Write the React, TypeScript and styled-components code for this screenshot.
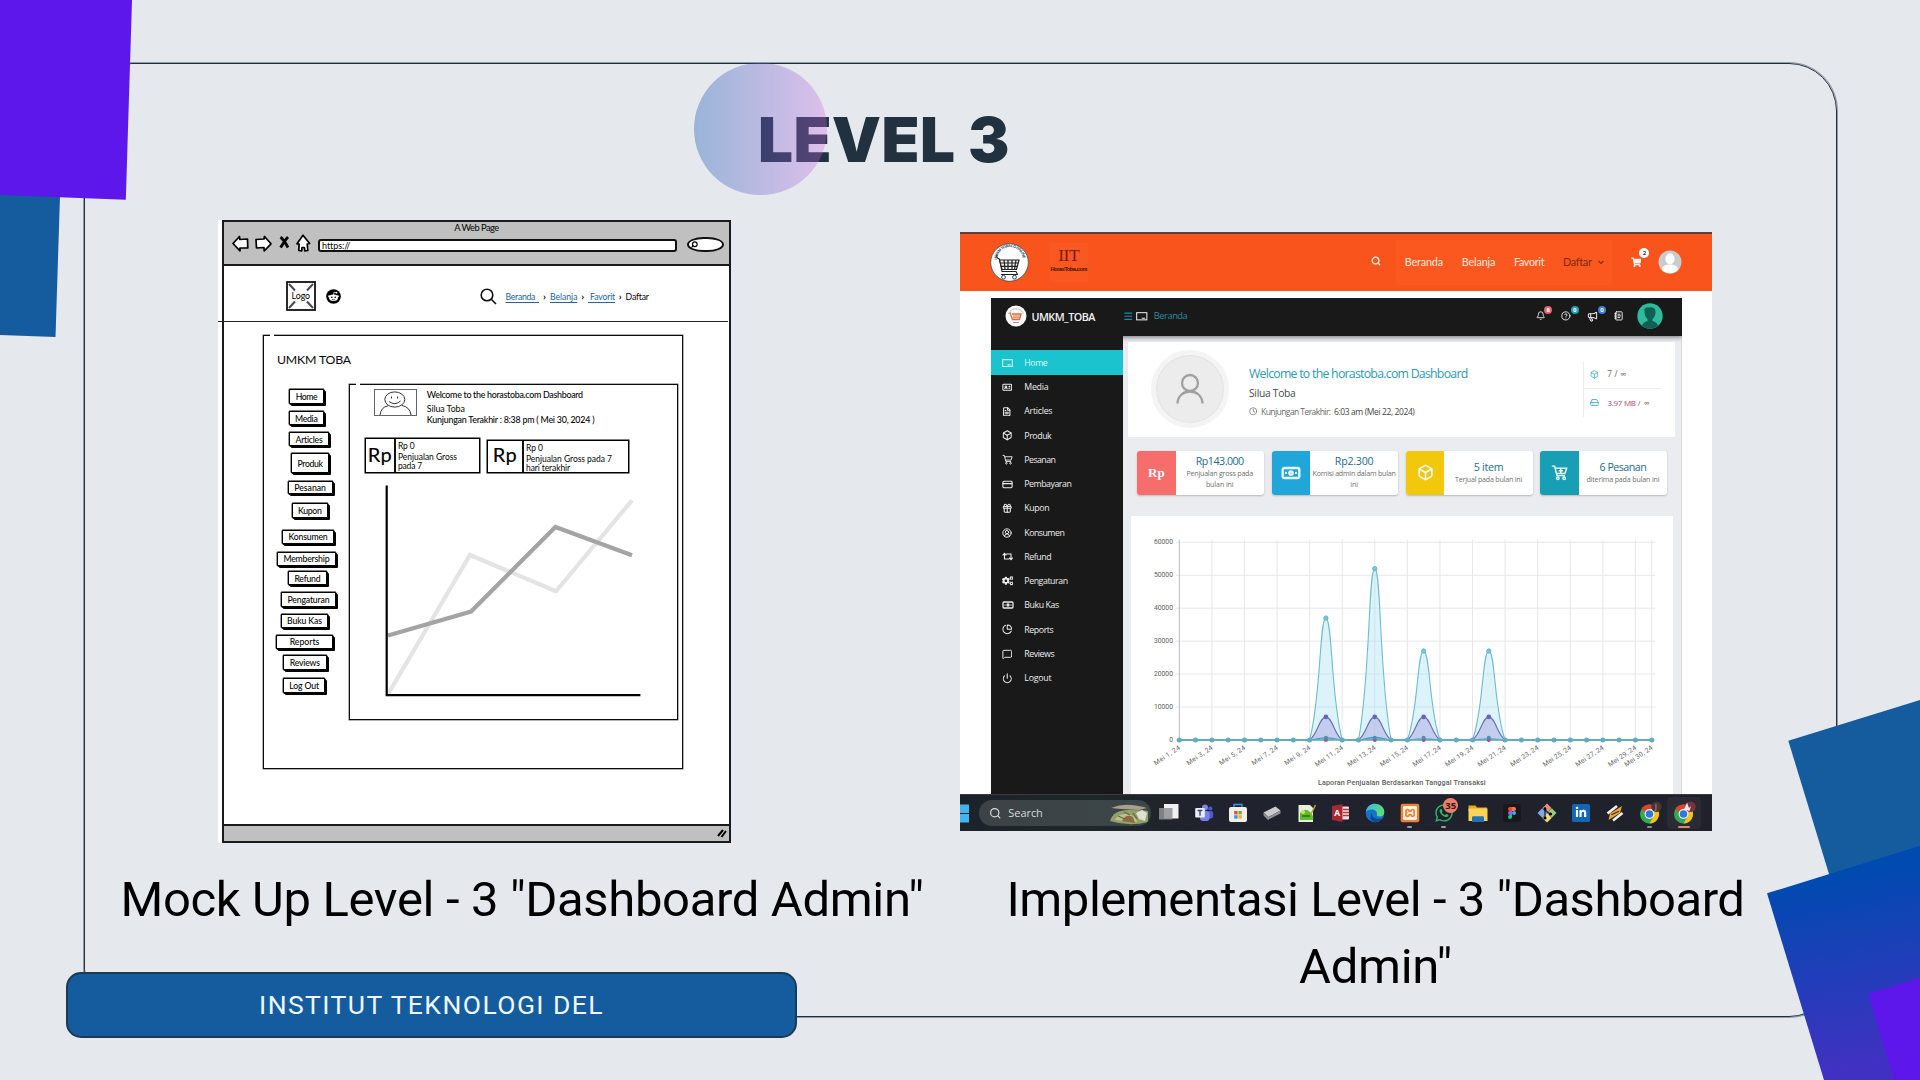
import React, { useLayoutEffect, useRef, useState } from "react";
import styled, { createGlobalStyle, css } from "styled-components";
import {
  Banknote, Box, ChartPie, CircleHelp, CircleUserRound, Clock, CreditCard, FileText, Gift,
  HardDrive, IdCard, Megaphone, Bell, Menu, MessageSquare, NotebookText, Power, Search,
} from "lucide-react";
import { FaCogs, FaLinkedinIn, FaShoppingCart, FaWhatsapp } from "react-icons/fa";
import { SiXampp } from "react-icons/si";

const Global = createGlobalStyle`
  * { box-sizing: border-box; }
  html, body { margin: 0; padding: 0; background: #e5e9ee; }
`;

const SKETCH = `"Lato", "Open Sans", sans-serif`;
const UI = `"Open Sans", "Noto Sans", sans-serif`;
const DISPLAY = `Inter, "Liberation Sans", sans-serif`;
const CAPTION = `Roboto, "Liberation Sans", sans-serif`;

/* ---------- text ---------- */

interface LabelProps {
  $size: number;
  $color?: string;
  $weight?: number;
  $line?: number;
  $font?: string;
  $underline?: boolean;
}

const Label = styled.span<LabelProps>`
  display: block;
  flex: none;
  width: max-content;
  white-space: pre;
  font-family: ${(p) => p.$font ?? "inherit"};
  font-size: ${(p) => p.$size}px;
  font-weight: ${(p) => p.$weight ?? 400};
  line-height: ${(p) => (p.$line ? `${p.$line}px` : "1.2")};
  color: ${(p) => p.$color ?? "inherit"};
  ${(p) => p.$underline && css`
    text-decoration: underline;
    text-underline-offset: 1.5px;
    text-decoration-thickness: 1px;
  `}
`;

/* Tracks a line of text so that it fills the given measure. */
function Fit({ w, children, ...rest }: LabelProps & { w: number; children: React.ReactNode }) {
  const ref = useRef<HTMLSpanElement>(null);
  const [track, setTrack] = useState(0);
  useLayoutEffect(() => {
    const el = ref.current;
    if (!el) return;
    const n = (el.textContent ?? "").length;
    el.style.letterSpacing = "0px";
    const natural = parseFloat(getComputedStyle(el).width);
    const t = (w - natural) / Math.max(1, n);
    el.style.letterSpacing = `${t}px`;
    setTrack(t);
  }, [w, children]);
  return <Label ref={ref} style={{ letterSpacing: `${track}px` }} {...rest}>{children}</Label>;
}

/* ---------- slide ---------- */

const Slide = styled.main`
  position: relative;
  width: 1920px;
  height: 1080px;
  overflow: hidden;
  background: #e5e9ee;
  font-family: ${DISPLAY};
`;

const Frame = styled.div`
  position: absolute;
  left: 84px;
  top: 63px;
  width: 1753px;
  height: 954px;
  border: 1px solid #22303e;
  border-radius: 48px;
  box-shadow: 0 0 0 1px rgba(34, 48, 62, 0.42);
`;

const Backdrop = styled.svg`
  position: absolute;
  inset: 0;
`;

const Glow = styled.div`
  position: absolute;
  left: 694px;
  top: 62.5px;
  width: 132.5px;
  height: 132.5px;
  border-radius: 50%;
  background: linear-gradient(90deg, #004aad, #cb6ce6);
  opacity: 0.33;
  z-index: 2;
`;

const Page = styled.div`
  position: relative;
  display: flex;
  flex-direction: column;
  height: 100%;
`;

const Heading = styled.h1`
  margin: 0;
  height: 220px;
  padding: 102px 0 0 758px;
`;

const Columns = styled.div`
  display: flex;
  gap: 26px;
  padding-left: 110px;
`;

const Column = styled.section<{ $w: number; $top?: number }>`
  width: ${(p) => p.$w}px;
  padding-top: ${(p) => p.$top ?? 0}px;
`;

const Caption = styled.div<{ $top: number }>`
  display: flex;
  flex-direction: column;
  align-items: center;
  margin-top: ${(p) => p.$top}px;
  font-family: ${CAPTION};
`;

const Institute = styled.div`
  display: flex;
  align-items: center;
  width: 731px;
  height: 66px;
  margin: 39px 0 0 -44px;
  padding: 0 0 1px 191px;
  border: 2px solid #1b3a55;
  border-radius: 15px;
  background: #155c9e;
  font-family: ${CAPTION};
`;

/* ---------- wireframe ---------- */

const Paper = styled.div`
  width: 513px;
  height: 623px;
  margin-left: 108px;
  padding-left: 4px;
  background: #fff;
  font-family: ${SKETCH};
  color: #060606;
`;

const Browser = styled.div`
  display: flex;
  flex-direction: column;
  width: 509px;
  height: 623px;
  border: 2px solid #1a1a1a;
`;

const BrowserBar = styled.div`
  display: flex;
  flex-direction: column;
  align-items: center;
  height: 44px;
  border-bottom: 2px solid #1a1a1a;
  background: #c0c0c0;
`;

const BrowserTools = styled.div`
  display: flex;
  align-items: center;
  width: 100%;
  height: 23px;
  padding-left: 8px;
  svg { flex: none; }
`;

const BackArrow = styled.svg`margin-top: -4px;`;
const NextArrow = styled.svg`margin: -4px 0 0 6px;`;
const StopMark = styled.svg`margin: -6px 0 0 7px;`;
const HomeMark = styled.svg`margin: -5px 0 0 6px;`;
const RedditMark = styled.svg`margin-left: 10px;`;
const SiteSearch = styled.svg`margin: 0 9px 0 138.5px;`;

const Address = styled.div`
  display: flex;
  align-items: center;
  width: 359px;
  height: 13px;
  margin: 0 10px 0 7px;
  padding-left: 2px;
  border: 2px solid #111;
  border-radius: 3px;
  background: #fff;
`;

const Pill = styled.div`
  display: flex;
  align-items: center;
  width: 37px;
  height: 15px;
  margin-top: -2px;
  padding-left: 2px;
  border: 2px solid #111;
  border-radius: 18px / 8px;
  background: #fff;
  svg { transform: scaleX(-1); }
`;

const SiteNav = styled.div`
  display: flex;
  align-items: center;
  height: 55px;
  padding: 5px 0 0 62px;
  svg { flex: none; }
`;

const Crumb = styled.span<{ $w: number }>`
  width: ${(p) => p.$w}px;
  text-align: center;
  font-size: 10px;
  font-weight: 700;
  line-height: 10px;
`;

const Rule = styled.div`
  flex: none;
  width: 510px;
  height: 1px;
  margin-left: -6px;
  background: #222;
`;

const panel = css<{ $gap: number }>`
  position: relative;
  border: 1px solid #0c0c0c;
  box-shadow: 0 0 0 0.5px rgba(0, 0, 0, 0.6);
  &::before {
    content: "";
    position: absolute;
    left: ${(p) => p.$gap}px;
    top: -2px;
    width: 4px;
    height: 3px;
    background: #fff;
  }
`;

const OuterPanel = styled.div<{ $gap: number }>`
  ${panel}
  flex: none;
  width: 420px;
  height: 434px;
  margin: 13px 0 0 39px;
  padding-top: 16px;
`;

const PanelTitle = styled.div`
  height: 16px;
  padding-left: 13px;
`;

const PanelBody = styled.div`
  display: flex;
`;

const ButtonRail = styled.div`
  display: flex;
  flex-direction: column;
  width: 85px;
  padding-top: 21.3px;
`;

const SketchButton = styled.div<{ $x: number; $w: number; $h: number; $gap: number }>`
  display: flex;
  flex: none;
  align-items: center;
  justify-content: center;
  width: ${(p) => p.$w - 2}px;
  height: ${(p) => p.$h - 2}px;
  margin: ${(p) => p.$gap}px 0 2px ${(p) => p.$x}px;
  border: 1px solid #000;
  border-radius: 1px;
  background: #fff;
  box-shadow: 0 0 0 0.4px #000, 1px 1px 0 #000, 2px 2px 0 #000;
`;

const InnerPanel = styled.div<{ $gap: number }>`
  ${panel}
  flex: none;
  width: 329px;
  height: 336px;
  margin-top: 16px;
`;

const Visitor = styled.div`
  display: flex;
  height: 52.7px;
  padding: 4.3px 0 0 24.3px;
  gap: 9.5px;
`;

const SketchCards = styled.div`
  display: flex;
  gap: 6.7px;
  height: 35px;
  padding-left: 15px;
`;

const SketchCard = styled.div<{ $w: number; $top: number; $cell: number }>`
  display: flex;
  width: ${(p) => p.$w}px;
  margin-top: ${(p) => p.$top}px;
  border: 1px solid #000;
  box-shadow: 0 0 0 0.5px #000;
  overflow: hidden;
  > :first-child { width: ${(p) => p.$cell}px; }
`;

const RpCell = styled.div`
  display: flex;
  flex: none;
  justify-content: center;
  border-right: 2px solid #111;
`;

const RpLines = styled.div`
  padding: 2.5px 0 0 2px;
`;

const StatusBar = styled.div`
  display: flex;
  align-items: center;
  justify-content: flex-end;
  height: 17px;
  margin-top: auto;
  padding-right: 2px;
  border-top: 2px solid #1a1a1a;
  background: #c0c0c0;
`;

type Btn = [string, number, number, number, number, number];
/* label, left, right, top, bottom, text width */
const buttons: Btn[] = [
  ["Home", 289, 326, 389.3, 405.7, 21.7],
  ["Media", 288.5, 326, 411, 427.3, 22.4],
  ["Articles", 289, 331, 432.3, 448.3, 27],
  ["Produk", 290.6, 331.5, 453.3, 475.3, 25],
  ["Pesanan", 287.5, 334.7, 480.7, 496.3, 31.7],
  ["Kupon", 291.6, 330, 503.3, 519.7, 23.4],
  ["Konsumen", 282, 336, 530, 546, 39],
  ["Membership", 277, 337.8, 552, 568, 45.8],
  ["Refund", 287.8, 329, 571.3, 587.3, 26],
  ["Pengaturan", 281, 337.8, 592, 608.7, 42],
  ["Buku Kas", 281, 329.8, 613.7, 629.7, 34.8],
  ["Reports", 276, 335, 634.7, 650.7, 29.6],
  ["Reviews", 283, 328.5, 655.3, 671.7, 30],
  ["Log Out", 283.3, 327, 678.3, 694.7, 29.6],
];

function Wireframe() {
  return (
    <Paper>
      <Browser>
        <BrowserBar>
          <Fit w={44.5} $size={9.3} $line={12}>A Web Page</Fit>
          <BrowserTools>
            <BackArrow width="17" height="17" viewBox="0 0 17 17" fill="#fff" stroke="#000" strokeWidth="1.7" strokeLinejoin="round">
              <path d="M1 8.5 7.5 1.5 7.8 4.5 15.5 4 15.8 13 8 13 8 15.8Z" />
            </BackArrow>
            <NextArrow width="17" height="17" viewBox="0 0 17 17" fill="#fff" stroke="#000" strokeWidth="1.7" strokeLinejoin="round">
              <path d="M16 8.8 9.5 1.5 9 4 1 4.5 1.5 13 9 12.5 9.2 16Z" />
            </NextArrow>
            <StopMark width="11" height="13" viewBox="0 0 11 13" fill="none" stroke="#000" strokeWidth="2.8">
              <path d="M1.5 1.2C5 4 7 8 9 11.5M9 1C6 4 4 8 1.5 11.5" />
            </StopMark>
            <HomeMark width="15" height="18" viewBox="0 0 15 18" fill="#fff" stroke="#000" strokeWidth="1.7" strokeLinejoin="round">
              <path d="M7 1.2 13.6 9.5 11.2 10 11.8 16.5 8.8 16.8 8.4 13.5 6 13.5 5.8 16.8 2.8 16.5 3.2 10 1 9.8Z" />
            </HomeMark>
            <Address><Fit w={28} $size={9} $line={10}>https://</Fit></Address>
            <Pill><Search size={7} strokeWidth={4} /></Pill>
          </BrowserTools>
        </BrowserBar>
        <SiteNav>
          <svg width="30" height="30" viewBox="0 0 30 30">
            <rect x="1" y="1" width="28" height="28" fill="#fff" stroke="#111" strokeWidth="1.8" />
            <path d="M3 3 9 9.5M27 3 21 9.5M3 27 9 20.5M27 27 21 20.5" stroke="#4a4a4a" strokeWidth="2" />
            <path d="M9 9.5 21 20.500M21 9.5 9 20.500" stroke="#e2e2e2" strokeWidth="1" />
            <text x="5.6" y="17.8" fontSize="8.8" fontFamily="Lato" textLength="18.5">Logo</text>
          </svg>
          <RedditMark width="15" height="15" viewBox="0 0 15 15">
            <circle cx="7.5" cy="7.5" r="7.3" fill="#000" />
            <ellipse cx="7.5" cy="8.8" rx="4.4" ry="3.2" fill="#fff" />
            <circle cx="3.2" cy="7.3" r="1.1" fill="#fff" /><circle cx="11.8" cy="7.3" r="1.1" fill="#fff" />
            <circle cx="5.8" cy="8.3" r=".8" /><circle cx="9.2" cy="8.3" r=".8" />
            <path d="M7.5 6 8 3.2 10.3 3.7" stroke="#fff" fill="none" strokeWidth=".7" /><circle cx="10.5" cy="3.7" r=".9" fill="#fff" />
            <path d="M5.8 10.2Q7.5 11.3 9.2 10.2" stroke="#000" fill="none" strokeWidth=".6" />
          </RedditMark>
          <SiteSearch width="17" height="17" viewBox="0 0 17 17" fill="none" stroke="#111" strokeWidth="1.6">
            <circle cx="7" cy="7" r="5.8" /><path d="M11 11 16 16" />
          </SiteSearch>
          <Fit w={33.5} $size={8.7} $line={11} $color="#2064a0" $underline>{"Beranda  "}</Fit>
          <Crumb $w={11}>›</Crumb>
          <Fit w={27.4} $size={8.7} $line={11} $color="#2064a0" $underline>Belanja</Fit>
          <Crumb $w={10.6}>›</Crumb>
          <Fit w={27} $size={8.7} $line={11} $color="#2064a0" $underline>{" Favorit"}</Fit>
          <Crumb $w={10.6}>›</Crumb>
          <Fit w={23} $size={8.7} $line={11}>Daftar</Fit>
        </SiteNav>
        <Rule />
        <OuterPanel $gap={6}>
          <PanelTitle><Fit w={74} $size={12.3} $line={16}>UMKM TOBA</Fit></PanelTitle>
          <PanelBody>
            <ButtonRail>
              {buttons.map(([name, l, r, t, b, w], i) => (
                <SketchButton key={name} $x={l - 264} $w={r - l} $h={b - t} $gap={i ? t - buttons[i - 1][4] : 0}>
                  <Fit w={w} $size={8.7} $line={11} $weight={500}>{name}</Fit>
                </SketchButton>
              ))}
            </ButtonRail>
            <InnerPanel $gap={6}>
              <Visitor>
                <svg width="43" height="27" viewBox="0 0 43 27" fill="none" stroke="#333" strokeWidth="1">
                  <rect x=".5" y=".5" width="42" height="26" stroke="#666" />
                  <ellipse cx="20.8" cy="10.5" rx="10" ry="7.6" />
                  <path d="M15 12.5Q21 17 26.5 12M6 26Q7 18 14 16.8M28 16.5Q36 18 37 26" />
                  <path d="M17.5 7.5v2M23.5 7.5v2" />
                </svg>
                <div>
                  <Fit w={156} $size={8.9} $line={11.5} $weight={500}>Welcome to the horastoba.com Dashboard</Fit>
                  <Fit w={38} $size={8.9} $line={15}>Silua Toba</Fit>
                  <Fit w={167.5} $size={8.9} $line={8} $weight={500}>Kunjungan Terakhir : 8:38 pm ( Mei 30, 2024 )</Fit>
                </div>
              </Visitor>
              <SketchCards>
                <SketchCard $w={115.3} $top={0} $cell={30}>
                  <RpCell><Fit w={24.500} $size={20} $line={31} $weight={500}>Rp</Fit></RpCell>
                  <RpLines>
                    <Fit w={16.5} $size={8.5} $line={11}>Rp 0</Fit>
                    <Fit w={59} $size={8.5} $line={10}>Penjualan Gross</Fit>
                    <Fit w={24} $size={8.5} $line={9.5}>pada 7</Fit>
                  </RpLines>
                </SketchCard>
                <SketchCard $w={142.4} $top={2} $cell={36}>
                  <RpCell><Fit w={24.500} $size={20} $line={27} $weight={500}>Rp</Fit></RpCell>
                  <RpLines>
                    <Fit w={17} $size={8.5} $line={11}>Rp 0</Fit>
                    <Fit w={86} $size={8.5} $line={10}>Penjualan Gross pada 7</Fit>
                    <Fit w={44} $size={8.5} $line={9.5}>hari terakhir</Fit>
                  </RpLines>
                </SketchCard>
              </SketchCards>
              <svg width="326" height="240" viewBox="350 472.7 326 240" fill="none">
                <path d="M388 694 470 554.7 556 591 632 500" stroke="#e4e4e4" strokeWidth="4.2" />
                <path d="M388 635.3 471 611.3 555.4 526.7 632 555" stroke="#a4a4a4" strokeWidth="4.2" />
                <path d="M386.7 485.3V694.9H640.4" stroke="#000" strokeWidth="2.2" />
              </svg>
            </InnerPanel>
          </PanelBody>
        </OuterPanel>
        <StatusBar>
          <svg width="10" height="9" viewBox="0 0 10 9" stroke="#000" strokeWidth="2"><path d="M1 7 6 1M4.5 8 9 2" /></svg>
        </StatusBar>
      </Browser>
    </Paper>
  );
}

/* ---------- live site ---------- */

const Shot = styled.div`
  display: flex;
  flex-direction: column;
  width: 752px;
  height: 599px;
  border-top: 2px solid #5f4237;
  background: #fff;
  font-family: ${UI};
  svg { flex: none; }
`;

const StoreBar = styled.div`
  display: flex;
  flex: none;
  align-items: center;
  height: 57px;
  padding: 0 0 1px 30.2px;
  background: #f9541b;
  color: #ffe9dc;
`;

const Brand = styled.div`
  display: flex;
  flex-direction: column;
  align-items: center;
  width: 38px;
  height: 39px;
  margin: 0 283.5px 0 20.5px;
  padding-top: 2px;
  background: #fa5820;
`;

const StoreSearch = styled(Search)`
  margin-top: -2px;
`;

const StoreNav = styled.nav`
  display: flex;
  align-items: center;
  width: 216.5px;
  height: 45px;
  margin: 0 18.5px 0 14.5px;
  padding-left: 9px;
  gap: 18.8px;
  background: #fb5820;
  font-family: Lato, sans-serif;
`;

const Dropdown = styled.div`
  display: flex;
  align-items: center;
  gap: 6px;
  color: #83280e;
`;

const CartSlot = styled.div<{ $w: number; $ml?: number }>`
  position: relative;
  display: flex;
  width: ${(p) => p.$w}px;
  margin-left: ${(p) => p.$ml ?? 0}px;
`;

const Badge = styled.span<{ $d: number; $bg: string; $fg: string; $x: number; $y: number; $fs?: number }>`
  position: absolute;
  left: ${(p) => p.$x}px;
  top: ${(p) => p.$y}px;
  width: ${(p) => p.$d}px;
  height: ${(p) => p.$d}px;
  border-radius: 50%;
  background: ${(p) => p.$bg};
  color: ${(p) => p.$fg};
  font: 700 ${(p) => p.$fs ?? 6}px/${(p) => p.$d}px ${UI};
  text-align: center;
`;

const Admin = styled.div`
  display: flex;
  flex-direction: column;
  flex: 1;
  min-height: 0;
  margin: 7px 30px 0 31px;
  background: #ebecf0;
  overflow: hidden;
`;

const AdminBar = styled.header`
  position: relative;
  display: flex;
  flex: none;
  align-items: center;
  height: 38px;
  padding: 0 0 2px 13.5px;
  background: #191919;
  color: #e8e8e8;
  box-shadow: 0 1px 5px rgba(0, 0, 0, 0.55);
`;

const SiteName = styled.div`
  margin: 0 28.5px 0 5px;
`;

const BarTablet = styled.div`
  display: flex;
  margin: 1px 6px 0 2.5px;
`;

const AdminBody = styled.div`
  display: flex;
  flex: 1;
  min-height: 0;
`;

const Sidebar = styled.nav`
  position: relative;
  flex: none;
  width: 131.7px;
  padding-top: 14.4px;
  background: #191919;
`;

const SideItem = styled.div<{ $on?: boolean }>`
  display: flex;
  align-items: center;
  height: 24.27px;
  padding: 0.6px 0 0 10.5px;
  gap: 11.8px;
  color: ${(p) => (p.$on ? "#d5fbfb" : "#ececec")};
  background: ${(p) => (p.$on ? "#1ac3cd" : "transparent")};
`;

const IconSlot = styled.span`
  display: flex;
  width: 11px;
  flex: none;
`;

const Main = styled.div`
  flex: 1;
  padding: 5.7px 6px 0 5.3px;
  border-right: 1px solid #d8dadf;
`;

const Welcome = styled.div`
  display: flex;
  height: 95.4px;
  padding-left: 23px;
  background: #fff;
`;

const Portrait = styled.div`
  display: flex;
  flex: none;
  align-items: center;
  justify-content: center;
  width: 78px;
  height: 78px;
  margin-top: 8.5px;
  border-radius: 50%;
  background: #ececec;
  border: 5px solid #f4f4f4;
  box-shadow: inset 0 0 0 1px #e2e2e2;
`;

const Greeting = styled.div`
  flex: none;
  width: 354px;
  padding: 22px 0 0 20px;
`;

const Visit = styled.div`
  display: flex;
  align-items: center;
  gap: 3.5px;
  height: 16px;
  color: #6b6b6b;
`;

const Quota = styled.div`
  width: 79px;
  height: 56px;
  margin-top: 19px;
  border-left: 1px solid #eee;
`;

const QuotaRow = styled.div<{ $line?: boolean }>`
  display: flex;
  align-items: center;
  gap: 8.5px;
  height: 28px;
  padding-left: 6px;
  color: #2aa5bb;
  ${(p) => p.$line && css`border-bottom: 1px solid #eee;`}
`;

const Pair = styled.div`
  display: flex;
`;

const Stats = styled.div`
  display: flex;
  gap: 7.8px;
  margin: 14.2px 0 0 9.3px;
`;

const Stat = styled.div`
  display: flex;
  flex: none;
  width: 126.6px;
  height: 43.4px;
  border-radius: 3px;
  background: #fff;
  overflow: hidden;
  box-shadow: 0 1px 2px rgba(0, 0, 0, 0.22);
`;

const StatIcon = styled.div<{ $bg: string }>`
  display: flex;
  align-items: center;
  justify-content: center;
  flex: none;
  width: 38.3px;
  background: ${(p) => p.$bg};
  color: #e9fbff;
`;

const StatText = styled.div`
  display: flex;
  flex: 1;
  flex-direction: column;
  align-items: center;
  justify-content: center;
  padding-bottom: 1px;
`;

const ChartCard = styled.div`
  width: 542px;
  height: 279px;
  margin: 21px 0 0 3px;
  background: #fff;
`;

const Taskbar = styled.div`
  display: flex;
  flex: none;
  align-items: center;
  height: 37px;
  border-top: 1px solid #3a3c44;
  background: linear-gradient(90deg, #1c222a, #1d2827 18%, #20222d 32%, #1f212b);
`;

const SearchBox = styled.div`
  display: flex;
  align-items: center;
  width: 171.5px;
  height: 26px;
  margin: 0 1.5px 0 10.3px;
  padding-left: 9.5px;
  border-radius: 13px;
  background: linear-gradient(90deg, #3d4246, #3b4648);
  color: #d5d9da;
  overflow: hidden;
`;

const SearchWord = styled.div`
  margin: 0 66.5px 1px 7px;
`;

const TaskApp = styled.div<{ $on?: boolean }>`
  position: relative;
  display: flex;
  flex: none;
  align-items: center;
  justify-content: center;
  width: 34.3px;
  height: 32px;
  border-radius: 4px;
  background: ${(p) => (p.$on ? "#2a2b33" : "none")};
`;

const Running = styled.i<{ $w: number; $c: string }>`
  position: absolute;
  bottom: 1px;
  width: ${(p) => p.$w}px;
  height: 2px;
  border-radius: 1px;
  background: ${(p) => p.$c};
`;

const Tablet = ({ w = 11, s = 1.2 }: { w?: number; s?: number }) => (
  <svg width={w} height={w * 0.75} viewBox="0 0 12 9" fill="none" stroke="currentColor" strokeWidth={s}>
    <rect x=".7" y=".7" width="10.6" height="7.500" />
    <path d="M6 6.500H9.500" />
  </svg>
);

const CartLine = ({ size, plus }: { size: number; plus?: boolean }) => (
  <svg width={size} height={size} viewBox="0 0 20 20" fill="none" stroke="currentColor" strokeWidth="1.7">
    <path d="M1 2.5h3.3l2.6 11h9.6M4.9 5h13.6l-2 6H6.4" />
    {plus && <path d="M11.5 5.5v5M9 8h5" />}
    <circle cx="8" cy="16.8" r="1.5" /><circle cx="15.5" cy="16.8" r="1.5" />
  </svg>
);

const Retweet = () => (
  <svg width="11.500" height="9" viewBox="0 0 14 11" fill="none" stroke="currentColor" strokeWidth="1.300">
    <path d="M.8 4 3 1.600 5.200 4M3 2v6.500H9M8.800 7 11 9.400 13.200 7M11 9V2.500H5" />
  </svg>
);

const side: [string, number, React.ReactNode][] = [
  ["Home", 23, <Tablet />],
  ["Media", 24, <IdCard size={10.5} strokeWidth={2.4} />],
  ["Articles", 28, <FileText size={9.5} strokeWidth={2.6} />],
  ["Produk", 27, <Box size={10.5} strokeWidth={2.3} />],
  ["Pesanan", 31, <CartLine size={11} />],
  ["Pembayaran", 47, <CreditCard size={11} strokeWidth={2.4} />],
  ["Kupon", 25, <Gift size={10.5} strokeWidth={2.4} />],
  ["Konsumen", 40, <CircleUserRound size={10} strokeWidth={2.4} />],
  ["Refund", 27, <Retweet />],
  ["Pengaturan", 43.3, <FaCogs size={11.5} />],
  ["Buku Kas", 34.5, <Banknote size={12} strokeWidth={2.6} />],
  ["Reports", 29, <ChartPie size={10.5} strokeWidth={2.3} />],
  ["Reviews", 30, <MessageSquare size={10.5} strokeWidth={2.2} />],
  ["Logout", 27, <Power size={10.5} strokeWidth={2.4} />],
];

/* sales chart geometry */
const X0 = 1179.3, STEP = 16.29, Y0 = 739.7, UNIT = 32.95 / 10000;
const days = Array.from({ length: 30 }, (_, i) => i + 1);
const px = (d: number) => X0 + (d - 1) * STEP;
const py = (v: number) => Y0 - v * UNIT;

function spline(values: Record<number, number>) {
  const p = days.map((d) => [px(d), py(values[d] ?? 0)]);
  const ctrl = p.map((c, i) => {
    const a = p[Math.max(0, i - 1)], b = p[Math.min(p.length - 1, i + 1)];
    const d0 = Math.hypot(c[0] - a[0], c[1] - a[1]), d1 = Math.hypot(b[0] - c[0], b[1] - c[1]);
    const f0 = (0.4 * d0) / (d0 + d1), f1 = (0.4 * d1) / (d0 + d1);
    return [
      [c[0] - f0 * (b[0] - a[0]), Math.min(Y0, c[1] - f0 * (b[1] - a[1]))],
      [c[0] + f1 * (b[0] - a[0]), Math.min(Y0, c[1] + f1 * (b[1] - a[1]))],
    ];
  });
  return p.slice(1).reduce(
    (s, c, i) => `${s}C${ctrl[i][1].join(" ")} ${ctrl[i + 1][0].join(" ")} ${c.join(" ")}`,
    `M${p[0].join(" ")}`,
  );
}

const gross = { 10: 37000, 13: 52000, 16: 27000, 20: 27000 };
const earned = { 10: 7000, 13: 7000, 16: 7000, 20: 7000 };
const fee = { 10: 700, 13: 800, 16: 400, 20: 400 };
const ticks = [...days.filter((d) => d % 2), 30];

function SalesChart() {
  return (
    <svg width="542" height="278" viewBox="1131 515.7 542 278" fontFamily="Roboto, sans-serif" fill="none">
      {[0, 1, 2, 3, 4, 5, 6].map((k) => (
        <g key={k}>
          <path d={`M1176 ${py(k * 10000)}H1655.3`} stroke={k ? "#e6e7e9" : "#c5c9cc"} strokeWidth="1" />
          <text x="1173" y={py(k * 10000) + 2.1} fontSize="6.8" fill="#606060" textAnchor="end">{k * 10000}</text>
        </g>
      ))}
      {ticks.map((d) => (
        <g key={d}>
          <path d={`M${px(d)} 539.3V742`} stroke={d === 1 ? "#b9bcc0" : "#e6e7e9"} strokeWidth="1" />
          <text fontSize="6.8" fill="#6a6a6a" textAnchor="end" textLength={d > 9 ? 32.5 : 30} transform={`translate(${px(d) + 1.4} 748.5) rotate(-34)`}>
            Mei {d}, 24
          </text>
        </g>
      ))}
      <path d={spline(gross)} stroke="#71bccb" strokeWidth="1.1" fill="rgba(170,226,240,.42)" />
      <path d={spline(earned)} stroke="#6d6bb5" strokeWidth="1.1" fill="rgba(172,168,226,.5)" />
      <path d={spline(fee)} stroke="#4c9bb8" strokeWidth="1.1" fill="rgba(90,160,200,.6)" />
      <path d={`M${px(1)} ${Y0}H${px(30)}`} stroke="#62afc2" strokeWidth="1.4" />
      {days.map((d) => {
        const v = (gross as Record<number, number>)[d];
        return v ? (
          <g key={d}>
            <circle cx={px(d)} cy={Y0} r="2" fill="#b8478a" />
            <circle cx={px(d)} cy={py(700)} r="2" fill="#4a90b0" />
            <circle cx={px(d)} cy={py(7000)} r="2.4" fill="#6766b4" />
            <circle cx={px(d)} cy={py(v)} r="2.2" fill="#7cc6d2" stroke="#5fb0bf" strokeWidth=".8" />
          </g>
        ) : <circle key={d} cx={px(d)} cy={Y0} r="2.5" fill="#5fadbe" />;
      })}
      <text x="1401.8" y="784.8" fontSize="7.2" fontWeight="500" fill="#5d5d5d" textAnchor="middle" textLength="167.7">
        Laporan Penjualan Berdasarkan Tanggal Transaksi
      </text>
    </svg>
  );
}

const Chrome = ({ face }: { face: string }) => (
  <svg width="26" height="26" viewBox="0 0 26 26">
    <circle cx="12.5" cy="14" r="9.5" fill="#34a853" />
    <path d="M12.5 14 4.3 9.2A9.5 9.5 0 0 1 20.7 9.2Z" fill="#e0402f" />
    <path d="M12.5 9.2H20.7A9.5 9.5 0 0 1 12.5 23.5L16.6 16.4Z" fill="#fbc116" />
    <circle cx="12.5" cy="14" r="4.9" fill="#f4f6fa" />
    <circle cx="12.5" cy="14" r="3.8" fill="#2f78dc" />
    <circle cx="19.5" cy="6.8" r="5.2" fill={face} />
    {face === "#4b3532"
      ? <text x="18" y="9.2" fontSize="6.5" fill="#d8c0b8">J</text>
      : <path d="M13 9.5 16 2.5 18 8 20 6 18.5 11Z" fill="#fbe6ea" />}
  </svg>
);

const apps: { key: string; icon: React.ReactNode; run?: [number, string]; on?: boolean }[] = [
  { key: "taskview", icon: (
    <svg width="20" height="20" viewBox="0 0 20 20"><rect x="5" y="1" width="14.5" height="14.5" fill="#f0f1f3" /><rect x="0" y="5" width="13.5" height="11.5" fill="#8f9294" opacity=".85" /></svg>) },
  { key: "teams", icon: (
    <svg width="20" height="20" viewBox="0 0 20 20"><circle cx="11" cy="4.5" r="3" fill="#7b83eb" /><circle cx="16.3" cy="5.5" r="2.1" fill="#5059c9" /><rect x="13" y="8" width="6.2" height="7.5" rx="2.5" fill="#5059c9" /><rect x="6" y="8" width="9.5" height="10" rx="3" fill="#7b83eb" /><rect x="1.2" y="5" width="9.6" height="9.6" rx="1" fill="#eceefc" /><path d="M3.6 7.5h4.8M6 7.5v5.2" stroke="#3a3f9a" strokeWidth="1.4" /></svg>) },
  { key: "store", icon: (
    <svg width="20" height="20" viewBox="0 0 20 20"><path d="M6 5V1.5h8V5" stroke="#36a3e8" strokeWidth="1.3" fill="none" /><rect x="1" y="4" width="18" height="15" rx="2" fill="#f1efec" /><path d="M6.2 8h3.4v3.4H6.2z" fill="#e0522d" /><path d="M10.4 8h3.4v3.4h-3.4z" fill="#7cae2a" /><path d="M6.2 12.2h3.4v3.4H6.2z" fill="#3b95d8" /><path d="M10.4 12.2h3.4v3.4h-3.4z" fill="#f0b323" /></svg>) },
  { key: "chip", icon: (
    <svg width="20" height="20" viewBox="0 0 20 20"><path d="M1.500 9.500 13.500 3.500 18.500 7.500 6.500 14Z" fill="#c9cbcc" /><path d="M1.500 9.500 6.500 14v3.500L1.500 12.500ZM18.500 7.500v3L6.500 16.500V14Z" fill="#8d9092" /></svg>) },
  { key: "editor", icon: (
    <svg width="20" height="20" viewBox="0 0 20 20"><path d="M1.5 2H13l3 3v14H1.5z" fill="#e7efdf" /><path d="M3 10Q8 4 13 9T15.5 17H3Z" fill="#5fbb2f" /><circle cx="6" cy="9" r="2" fill="#c7e85c" /><path d="M5 13H13" stroke="#245f14" strokeWidth="1.3" /><path d="M18.5 2 13.5 12" stroke="#c79b32" strokeWidth="1.5" /></svg>) },
  { key: "access", icon: (
    <svg width="20" height="20" viewBox="0 0 20 20"><rect x="9" y="3.5" width="9" height="13" rx="1" fill="#f3dcdf" /><path d="M12 6.5h6M12 9.5h6M12 12.5h6" stroke="#b23840" strokeWidth="1.3" /><path d="M1 3 11.5 1v18L1 17Z" fill="#a52a35" /><text x="3.2" y="13.2" fontSize="8.5" fontWeight="700" fill="#fff">A</text></svg>) },
  { key: "edge", icon: (
    <svg width="20" height="20" viewBox="0 0 20 20"><defs><linearGradient id="eg" x1="0" y1="0" x2="1" y2=".5"><stop offset="0" stopColor="#35b8f1" /><stop offset="1" stopColor="#5fdc72" /></linearGradient></defs><circle cx="10" cy="10" r="9.3" fill="#1573c8" /><path d="M.9 8.5C2 3 6 .7 10 .7c5.5 0 9.3 3.8 9.3 8.2 0 3-2.3 4.6-4.8 4.6-2 0-3-.8-2.6-2C12.3 9 10.5 6.6 7 6.6 4 6.6 1.7 7.5.9 8.5Z" fill="url(#eg)" /><path d="M7.3 9.5C6 13 9 17 17.3 15.5 15.5 18 12.5 19.4 10 19.3 6 19 3.5 14 7.3 9.5Z" fill="#0d4a94" /></svg>) },
  { key: "xampp", run: [5, "#9a9ca4"], icon: (
    <svg width="20" height="20" viewBox="0 0 20 20"><rect x=".7" y=".7" width="18.6" height="18.6" rx="2" fill="#ee7f33" /><SiXampp x={3} y={3} size={14} color="#fff2e4" /></svg>) },
  { key: "whatsapp", run: [5, "#9a9ca4"], icon: <FaWhatsapp size={20} color="#2fb567" /> },
  { key: "explorer", icon: (
    <svg width="20" height="20" viewBox="0 0 20 20"><path d="M.5 2.5h7l1.5 2H19V8H.5Z" fill="#e8a91d" /><path d="M.5 5.5h19V18H.5Z" fill="#fbd356" /><path d="M4 19v-4.500q0-1.200 1.200-1.200h9.600q1.200 0 1.200 1.200V19Z" fill="#2372b6" /></svg>) },
  { key: "figma", icon: (
    <svg width="18" height="18" viewBox="0 0 18 18"><rect width="18" height="18" rx="2" fill="#19191c" /><path d="M9 3H7a2 2 0 0 0 0 4h2z" fill="#f24e1e" /><path d="M9 3h2a2 2 0 0 1 0 4H9z" fill="#ff7262" /><path d="M9 7H7a2 2 0 0 0 0 4h2z" fill="#a259ff" /><circle cx="11" cy="9" r="2" fill="#1abcfe" /><path d="M9 11H7a2 2 0 1 0 2 2z" fill="#0acf83" /></svg>) },
  { key: "git", icon: (
    <svg width="20" height="20" viewBox="0 0 20 20"><path d="M10 .5 14.5 5 10 10 5.5 5Z" fill="#ec8d82" /><path d="M5.2 5.3 10 10l-4.8 4.700L.5 10Z" fill="#7fa8e6" /><path d="M14.8 5.3 19.5 10l-4.700 4.700L10 10Z" fill="#94cf7c" /><path d="M5.3 15 10 10l4.700 5L10 19.5Z" fill="#f4db79" /><path d="M8 4v12M8 7l5 4" stroke="#2a2a2a" strokeWidth="1.3" fill="none" /><circle cx="8" cy="15" r="1.6" /><circle cx="13.5" cy="11" r="1.6" /><circle cx="8" cy="6" r="1.5" /></svg>) },
  { key: "linkedin", icon: (
    <svg width="18" height="18" viewBox="0 0 18 18"><rect width="18" height="18" rx="1.5" fill="#1266b4" /><FaLinkedinIn x={3} y={2.5} size={12} color="#fff" /></svg>) },
  { key: "sublime", icon: (
    <svg width="18" height="18" viewBox="0 0 18 18"><path d="M1.500 9.500 11 2M7 16.500 16.500 9" stroke="#f4f1ea" strokeWidth="2.600" /><path d="M16 2 4 9.500 2.500 16 14 9Z" fill="#eda437" /><path d="M5.500 10.800 13 7.200" stroke="#4a3010" strokeWidth="1.200" /></svg>) },
  { key: "chrome1", run: [5, "#8b8d95"], icon: <Chrome face="#4b3532" /> },
  { key: "chrome2", run: [12, "#e0876f"], on: true, icon: <Chrome face="#7b3145" /> },
];

const sub = { $size: 7.1, $color: "#6f6f6f", $line: 11.4 };
const head = { $size: 10.7, $color: "#1d6d92", $line: 14, $weight: 500 };

function LiveSite() {
  return (
    <Shot>
      <StoreBar>
        <svg width="39" height="39" viewBox="0 0 39 39">
          <defs><path id="arc" d="M7 17A13 13 0 0 1 33 17" /></defs>
          <circle cx="19.5" cy="19.5" r="18.8" fill="#fff" stroke="#4b4b4b" strokeWidth=".8" />
          <text fontSize="3.9" fontWeight="700" fill="#34506a"><textPath href="#arc" textLength="39">UMKM TOBA CO ONLINE</textPath></text>
          <path d="M7 12Q6 15 9.5 16L12 28.5H26L27.5 31.5H11" fill="none" stroke="#222" strokeWidth="1.1" />
          <path d="M9.5 17H29L26.5 26.5H12Z" fill="#eee" stroke="#222" strokeWidth="1.2" />
          <path d="M10 20H28.5M11 23.3H27.5M14 17l1 9.5M18 17v9.5M22 17v9.5M26 17l-1.5 9.5" stroke="#222" strokeWidth="1.2" />
          <circle cx="13.5" cy="34.2" r="1.9" fill="#fff" stroke="#223b66" /><circle cx="24.5" cy="34.2" r="1.9" fill="#fff" stroke="#223b66" />
        </svg>
        <Brand>
          <Fit w={21} $size={17.5} $line={21} $font={`"Liberation Serif", serif`} $color="#7c1d0b">IIT</Fit>
          <Fit w={36.5} $size={5.8} $line={7} $weight={700} $font={`"Liberation Sans", sans-serif`} $color="#43120a">HorasToba.com</Fit>
        </Brand>
        <StoreSearch size={10} strokeWidth={3.2} />
        <StoreNav>
          <Fit w={38.3} $size={10.8} $line={14}>Beranda</Fit>
          <Fit w={33.3} $size={10.8} $line={14}>Belanja</Fit>
          <Fit w={30.3} $size={10.8} $line={14}>Favorit</Fit>
          <Dropdown>
            <Fit w={28.3} $size={10.8} $line={14}>Daftar</Fit>
            <svg width="6" height="5" viewBox="0 0 6 5" fill="none" stroke="currentColor" strokeWidth="1.2"><path d="M.6 1 3 3.5 5.4 1" /></svg>
          </Dropdown>
        </StoreNav>
        <CartSlot $w={27}>
          <FaShoppingCart size={10.5} color="#fff2ea" />
          <Badge $d={10} $bg="#fff" $fg="#333" $x={8.8} $y={-8.5}>2</Badge>
        </CartSlot>
        <svg width="24" height="24" viewBox="0 0 24 24">
          <circle cx="12" cy="12" r="11.5" fill="#c9cbcd" />
          <ellipse cx="12" cy="8.8" rx="4.6" ry="5.5" fill="#fff" /><path d="M3.5 19.5Q5 14.5 12 14.5t8.5 5Q17 23.3 12 23.3T3.5 19.5Z" fill="#fff" />
        </svg>
      </StoreBar>

      <Admin>
        <AdminBar>
          <svg width="22" height="22" viewBox="0 0 22 22">
            <circle cx="11" cy="11" r="10.5" fill="#fafafa" />
            <path d="M3.5 9A8 8 0 0 1 18.5 9" fill="none" stroke="#999" strokeWidth="1" strokeDasharray="1 .6" />
            <path d="M5 7.5 7.5 14.5H14.5L16 9H7" fill="none" stroke="#df6b3d" strokeWidth="1.3" /><path d="M8 11h7M8 12.8h6.5" stroke="#df6b3d" /><path d="M8 17.5h6" stroke="#999" strokeWidth="1" />
          </svg>
          <SiteName><Fit w={63.3} $size={10.8} $line={15} $weight={600} $color="#f3f3f3">UMKM_TOBA</Fit></SiteName>
          <Menu size={10.5} strokeWidth={2.6} color="#158aa8" />
          <BarTablet><Tablet w={11.5} s={1.1} /></BarTablet>
          <Fit w={33.5} $size={9.3} $line={14} $color="#2a8ba2">Beranda</Fit>
          <CartSlot $w={25.7} $ml={348.5}>
            <Bell size={9.5} strokeWidth={2.3} /><Badge $d={8} $bg="#e5616b" $fg="#fff" $x={8.3} $y={-5}>8</Badge>
          </CartSlot>
          <CartSlot $w={26}>
            <CircleHelp size={9.8} strokeWidth={2.3} /><Badge $d={8} $bg="#1fa0b6" $fg="#fff" $x={9.3} $y={-5}>0</Badge>
          </CartSlot>
          <CartSlot $w={27}>
            <Megaphone size={11} strokeWidth={2.3} /><Badge $d={8} $bg="#3c82d6" $fg="#fff" $x={10.5} $y={-5}>0</Badge>
          </CartSlot>
          <CartSlot $w={22.5}><NotebookText size={9.8} strokeWidth={2.4} /></CartSlot>
          <svg width="26" height="26" viewBox="0 0 26 26">
            <circle cx="13" cy="13" r="12.7" fill="#2cbb9c" />
            <path d="M7.5 6Q9 3.5 12 4.5 18 3.5 18.5 8.5 18.5 14 15.5 16L15.5 18Q20 19 21 23 13 28.5 5 23 6 19 10.5 18V16Q7 13 7.5 6Z" fill="#0f5f53" />
          </svg>
        </AdminBar>
        <AdminBody>
          <Sidebar>
            {side.map(([name, w, icon], i) => (
              <SideItem key={name} $on={i === 0}>
                <IconSlot>{icon}</IconSlot>
                <Fit w={w} $size={8.8} $line={12} $weight={500}>{name}</Fit>
              </SideItem>
            ))}
          </Sidebar>
          <Main>
            <Welcome>
              <Portrait>
                <svg width="28" height="32" viewBox="0 0 28 32" fill="none" stroke="#a0a0a0" strokeWidth="2.3">
                  <circle cx="14" cy="10" r="8" /><path d="M1.5 30.5C2 14.5 26 14.5 26.5 30.5" />
                </svg>
              </Portrait>
              <Greeting>
                <Fit w={218.5} $size={12.3} $line={19} $color="#2c9ab2">Welcome to the horastoba.com Dashboard</Fit>
                <Fit w={46.5} $size={10.3} $line={21} $color="#4a4a4a">Silua Toba</Fit>
                <Visit>
                  <Clock size={8.5} strokeWidth={2} />
                  <Fit w={69.5} $size={8.5} $line={14} $color="#6b6b6b">Kunjungan Terakhir:</Fit>
                  <Fit w={80.5} $size={8.5} $line={14} $color="#474747">6:03 am (Mei 22, 2024)</Fit>
                </Visit>
              </Greeting>
              <Quota>
                <QuotaRow $line><Box size={8.8} strokeWidth={2} /><Fit w={19} $size={8.2} $line={10} $color="#666">7 / ∞</Fit></QuotaRow>
                <QuotaRow><HardDrive size={9} strokeWidth={2} />
                  <Pair>
                    <Fit w={30} $size={8} $line={10} $color="#b0476e">{"3.97 MB "}</Fit><Fit w={13} $size={8} $line={10} $color="#666">/ ∞</Fit>
                  </Pair>
                </QuotaRow>
              </Quota>
            </Welcome>
            <Stats>
              <Stat>
                <StatIcon $bg="#f76d6b"><Fit w={17} $size={13} $line={16} $weight={700} $font={`"Liberation Serif", serif`}>Rp</Fit></StatIcon>
                <StatText><Fit w={48} {...head}>Rp143.000</Fit><Fit w={66.5} {...sub}>Penjualan gross pada</Fit><Fit w={27.7} {...sub}>bulan ini</Fit></StatText>
              </Stat>
              <Stat>
                <StatIcon $bg="#20a6d8"><Banknote size={20} strokeWidth={2.8} /></StatIcon>
                <StatText><Fit w={38.5} {...head}>Rp2.300</Fit><Fit w={83} {...sub}>Komisi admin dalam bulan</Fit><Fit w={7.5} {...sub}>ini</Fit></StatText>
              </Stat>
              <Stat>
                <StatIcon $bg="#f2c80c"><Box size={17} strokeWidth={2.2} /></StatIcon>
                <StatText><Fit w={29.5} {...head}>5 item</Fit><Fit w={67} {...sub}>Terjual pada bulan ini</Fit></StatText>
              </Stat>
              <Stat>
                <StatIcon $bg="#189fb5"><CartLine size={17} plus /></StatIcon>
                <StatText><Fit w={46.7} {...head}>6 Pesanan</Fit><Fit w={73} {...sub}>diterima pada bulan ini</Fit></StatText>
              </Stat>
            </Stats>
            <ChartCard><SalesChart /></ChartCard>
          </Main>
        </AdminBody>
      </Admin>

      <Taskbar>
        <svg width="9" height="19" viewBox="0 0 9 19"><path d="M0 .5h9v8.500H0zM0 10h9v8.500H0z" fill="#3fb4ee" /></svg>
        <SearchBox>
          <Search size={12.5} strokeWidth={2.3} />
          <SearchWord><Fit w={34.5} $size={11} $line={16}>Search</Fit></SearchWord>
          <svg width="40" height="24" viewBox="0 0 40 24">
            <path d="M2 7Q12 3 22 4T38 7L30 9 12 8Z" fill="#a9a08c" />
            <path d="M1 20Q4 9 20 9T39 10V21Q20 26 1 20Z" fill="#93a06a" />
            <path d="M6 19Q9 12 18 13T28 21Z" fill="#b9c195" /><path d="M13 20Q17 12 24 16L26 22Z" fill="#8d6a45" />
            <path d="M27 12 33 9 38 12 36 20 30 18Z" fill="#dfe0d2" /><path d="M15 11l6 3M9 15l7 3M24 12l4 6" stroke="#5d6e3a" strokeWidth="1.3" />
          </svg>
        </SearchBox>
        {apps.map((a) => (
          <TaskApp key={a.key} $on={a.on}>
            {a.icon}
            {a.key === "whatsapp" && <Badge $d={15} $bg="#e9806f" $fg="#3a1512" $x={16.5} $y={1} $fs={9.5}>35</Badge>}
            {a.run && <Running $w={a.run[0]} $c={a.run[1]} />}
          </TaskApp>
        ))}
      </Taskbar>
    </Shot>
  );
}

export default function App() {
  return (
    <>
      <Global />
      <Slide>
        <Frame />
        <Backdrop width="1920" height="1080" viewBox="0 0 1920 1080">
          <defs>
            <linearGradient id="deep" x1="0" y1="0" x2=".12" y2="1">
              <stop offset=".18" stopColor="#004ab0" /><stop offset="1" stopColor="#4131c2" />
            </linearGradient>
          </defs>
          <path d="M0 190H60.2L55.5 337 0 335Z" fill="#155c9e" />
          <path d="M0 0H132L125.8 199.7 0 195Z" fill="#5d17eb" />
          <path d="M1788.3 740.7 1920 700V900L1829 874Z" fill="#155c9e" />
          <path d="M1767 893.3 1920 845.7V1080H1824Z" fill="url(#deep)" />
          <path d="M1868 994 1920 977.7V1080H1894.3Z" fill="#5d17eb" />
        </Backdrop>
        <Page>
          <Heading><Fit w={252} $size={62} $line={76} $weight={900} $color="#22313f">LEVEL 3</Fit></Heading>
          <Columns>
            <Column $w={824}>
              <Wireframe />
              <Caption $top={22.5}><Fit w={803} $size={49} $line={67.5} $color="#000">Mock Up Level - 3 "Dashboard Admin"</Fit></Caption>
              <Institute><Fit w={345} $size={26.5} $line={32} $color="#eef7ff">INSTITUT TEKNOLOGI DEL</Fit></Institute>
            </Column>
            <Column $w={831} $top={12}>
              <LiveSite />
              <Caption $top={34.5}>
                <Fit w={738} $size={49} $line={67.5} $color="#000">Implementasi Level - 3 "Dashboard</Fit>
                <Fit w={153} $size={49} $line={67.5} $color="#000">Admin"</Fit>
              </Caption>
            </Column>
          </Columns>
        </Page>
        <Glow />
      </Slide>
    </>
  );
}
